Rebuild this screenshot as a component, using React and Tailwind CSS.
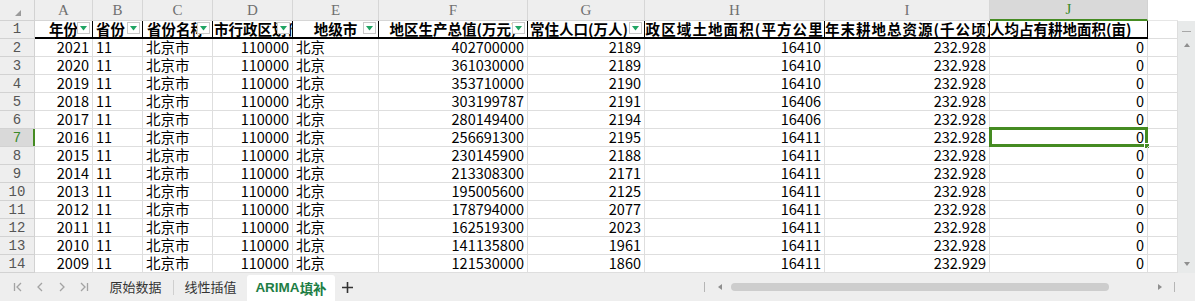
import React from 'react';

const sans = "font-['Noto_Sans_CJK_SC','Noto_Sans',sans-serif]";
const mono = "font-['Liberation_Mono',monospace]";
const serif = "font-['Liberation_Serif',serif]";

// header row: alignment tuned per column so the clipped titles show like the sheet does
const cols = [
  { key: 'A', w: 'w-[58px]', head: '年份', filter: true, align: 'justify-center' },
  { key: 'B', w: 'w-[50px]', head: '省份', filter: true, align: 'justify-center pr-[14px]' },
  { key: 'C', w: 'w-[70px]', head: '省份名称', filter: true, align: 'justify-start pl-[4px]' },
  { key: 'D', w: 'w-[80px]', head: '市行政区划代码', filter: true, align: 'justify-start pl-[1px]' },
  { key: 'E', w: 'w-[86px]', head: '地级市', filter: true, align: 'justify-center' },
  { key: 'F', w: 'w-[149px]', head: '地区生产总值(万元)', filter: true, align: 'justify-center' },
  { key: 'G', w: 'w-[117px]', head: '常住人口(万人)', filter: true, align: 'justify-start pl-[2px]' },
  { key: 'H', w: 'w-[180px]', head: '行政区域土地面积(平方公里)', filter: false, align: 'justify-start -ml-[15px] tracking-[1.1px]' },
  { key: 'I', w: 'w-[165px]', head: '年末耕地总资源(千公顷)', filter: false, align: 'justify-start tracking-[1px]' },
  { key: 'J', w: 'w-[158px]', head: '人均占有耕地面积(亩)', filter: false, align: 'justify-start' },
];

const rows = [
  ['2021', '402700000', '2189', '16410', '232.928'],
  ['2020', '361030000', '2189', '16410', '232.928'],
  ['2019', '353710000', '2190', '16410', '232.928'],
  ['2018', '303199787', '2191', '16406', '232.928'],
  ['2017', '280149400', '2194', '16406', '232.928'],
  ['2016', '256691300', '2195', '16411', '232.928'],
  ['2015', '230145900', '2188', '16411', '232.928'],
  ['2014', '213308300', '2171', '16411', '232.928'],
  ['2013', '195005600', '2125', '16411', '232.928'],
  ['2012', '178794000', '2077', '16411', '232.928'],
  ['2011', '162519300', '2023', '16411', '232.928'],
  ['2010', '141135800', '1961', '16411', '232.928'],
  ['2009', '121530000', '1860', '16411', '232.929'],
];

const grid = 'border-r border-b border-[#dedede]';

function FilterBtn() {
  return (
    <span className="absolute right-[2px] bottom-[3px] flex h-[12px] w-[13px] items-center justify-center border border-[#c9c9c9] bg-white">
      <svg width="7" height="5" viewBox="0 0 7 5">
        <path d="M0 0h7L3.5 4.5z" fill="#1fa463" />
      </svg>
    </span>
  );
}

function Cell({ w, right, children, selected }) {
  return (
    <div
      className={`${w} ${grid} relative flex h-full shrink-0 items-center whitespace-nowrap ${
        right ? 'justify-end pr-[3px]' : 'justify-start pl-[3px]'
      }`}
    >
      {children}
      {selected && (
        <>
          <span className="absolute -left-px -top-[2px] -right-px -bottom-px border-[3px] border-[#458b22]" />
          <span className="absolute -right-[3px] -bottom-[3px] h-[6px] w-[6px] border border-white bg-[#458b22]" />
        </>
      )}
    </div>
  );
}

function Tri({ dir }) {
  const d = {
    up: 'M0 4h6L3 0z',
    down: 'M0 0h6L3 4z',
    left: 'M4 0v6L0 3z',
    right: 'M0 0v6l4-3z',
  }[dir];
  const vert = dir === 'up' || dir === 'down';
  return (
    <svg width={vert ? 6 : 4} height={vert ? 4 : 6} viewBox={vert ? '0 0 6 4' : '0 0 4 6'}>
      <path d={d} fill="#8f8f8f" />
    </svg>
  );
}

function Chevron({ kind }) {
  return (
    <svg width="12" height="12" viewBox="0 0 12 12" fill="none" stroke="#a3a3a3" strokeWidth="1.3">
      {kind === 'first' && (
        <>
          <path d="M2.5 2v8" />
          <path d="M9 2L5 6l4 4" />
        </>
      )}
      {kind === 'prev' && <path d="M8 2L4 6l4 4" />}
      {kind === 'next' && <path d="M4 2l4 4-4 4" />}
      {kind === 'last' && (
        <>
          <path d="M3 2l4 4-4 4" />
          <path d="M9.5 2v8" />
        </>
      )}
    </svg>
  );
}

export default function App() {
  return (
    <div className={`h-[301px] w-[1195px] overflow-hidden bg-white text-black ${sans}`}>
      <div className="flex h-[273px]">
        <div className="w-[1178px] shrink-0">
          {/* column letters */}
          <div className="flex h-[21px]">
            <div className="relative flex w-[35px] shrink-0 border-r border-b border-[#d2d2d2] bg-[#eeeeee]">
              <svg className="absolute left-[15px] top-[10px]" width="6" height="6" viewBox="0 0 6 6">
                <path d="M6 0v6H0z" fill="#9a9a9a" />
              </svg>
            </div>
            {cols.map((c) => (
              <div
                key={c.key}
                className={`${c.w} ${serif} flex shrink-0 items-center justify-center border-r text-[15px] ${
                  c.key === 'J'
                    ? 'border-b-2 border-r-[#d2d2d2] border-b-[#458b22] bg-[#d9d9d9] text-[#3b8a2a]'
                    : 'border-b border-[#d6d6d6] bg-[#eeeeee] text-[#707070]'
                }`}
              >
                {c.key}
              </div>
            ))}
            <div className="w-[30px] shrink-0 border-b border-[#e6e6e6] bg-white" />
          </div>

          {/* header row */}
          <div className="flex h-[18px]">
            <div className={`${mono} flex w-[35px] shrink-0 items-center justify-center border-r border-b border-[#d2d2d2] bg-[#eeeeee] text-[14px] text-[#555]`}>
              1
            </div>
            {cols.map((c) => (
              <div
                key={c.key}
                className={`${c.w} relative shrink-0 overflow-hidden border-r border-b-2 border-black`}
              >
                <div className={`flex h-full items-center whitespace-nowrap ${c.align} text-[14.5px] font-bold leading-none`}>
                  <span className="shrink-0">{c.head}</span>
                </div>
                {c.filter && <FilterBtn />}
              </div>
            ))}
            <div className={`w-[30px] shrink-0 ${grid}`} />
          </div>

          {/* data rows */}
          {rows.map((r, i) => {
            const n = i + 2;
            const sel = n === 7;
            return (
              <div key={n} className="flex h-[18px] text-[14.5px] leading-none">
                <div
                  className={`${mono} relative flex w-[35px] shrink-0 items-center justify-center border-r border-b border-[#d2d2d2] text-[14px] ${
                    sel ? 'bg-[#d9d9d9] text-[#3b8a2a]' : 'bg-[#eeeeee] text-[#555]'
                  }`}
                >
                  {n}
                  {sel && <span className="absolute right-[-1px] top-0 h-full w-[2px] bg-[#458b22]" />}
                </div>
                <Cell w="w-[58px]" right>{r[0]}</Cell>
                <Cell w="w-[50px]">11</Cell>
                <Cell w="w-[70px]">北京市</Cell>
                <Cell w="w-[80px]" right>110000</Cell>
                <Cell w="w-[86px]">北京</Cell>
                <Cell w="w-[149px]" right>{r[1]}</Cell>
                <Cell w="w-[117px]" right>{r[2]}</Cell>
                <Cell w="w-[180px]" right>{r[3]}</Cell>
                <Cell w="w-[165px]" right>{r[4]}</Cell>
                <Cell w="w-[158px]" right selected={sel}>0</Cell>
                <Cell w="w-[30px]" />
              </div>
            );
          })}
        </div>

        {/* vertical scrollbar */}
        <div className="flex w-[17px] shrink-0 flex-col">
          <div className="h-[21px] bg-white" />
          <div className="flex flex-1 flex-col items-center bg-[#e8eaea] pt-[10px] pb-[7px]">
            <span className="h-px w-[9px] bg-[#a8a8a8]" />
            <span className="mt-[11px] flex">
              <Tri dir="up" />
            </span>
            <span className="mt-auto flex">
              <Tri dir="down" />
            </span>
          </div>
        </div>
      </div>

      {/* sheet tabs */}
      <div className="flex h-[28px] items-stretch bg-[#eeeeee]">
        <div className="flex items-center pl-[7px]">
          {['first', 'prev', 'next', 'last'].map((k) => (
            <span key={k} className="flex w-[22px] justify-center">
              <Chevron kind={k} />
            </span>
          ))}
        </div>
        <div className="ml-[3px] flex w-[75px] items-center justify-center text-[13px] text-[#333]">原始数据</div>
        <div className="flex items-center">
          <span className="h-[15px] w-px bg-[#cfcfcf]" />
        </div>
        <div className="flex w-[73px] items-center justify-center text-[13px] text-[#333]">线性插值</div>
        <div className="mt-[2px] flex w-[88px] items-center justify-center rounded-t-[3px] bg-white text-[13.5px] font-bold text-[#1e7e45]">
          <span className="font-['Liberation_Sans',sans-serif]">ARIMA</span>
          <span>填补</span>
        </div>
        <div className="flex w-[24px] items-center justify-center">
          <svg width="11" height="11" viewBox="0 0 11 11" stroke="#333" strokeWidth="1.6">
            <path d="M5.5 0v11M0 5.5h11" />
          </svg>
        </div>

        {/* horizontal scrollbar */}
        <div className="ml-auto flex items-center pr-[20px]">
          <span className="h-[10px] w-px bg-[#b5b5b5]" />
          <span className="ml-[13px] flex">
            <Tri dir="left" />
          </span>
          <span className="ml-[9px] h-[8px] w-[378px] rounded-full bg-[#cdcdcd]" />
          <span className="ml-[49px] flex">
            <Tri dir="right" />
          </span>
          <span className="ml-[12px] h-[10px] w-px bg-[#b5b5b5]" />
        </div>
      </div>
    </div>
  );
}
